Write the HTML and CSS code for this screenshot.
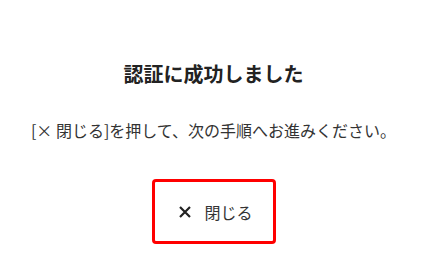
FILE: index.html
```html
<!DOCTYPE html>
<html lang="ja">
<head>
  <meta charset="UTF-8">
  <meta name="viewport" content="width=device-width, initial-scale=1.0">
  <title>認証完了</title>
  <link rel="stylesheet" href="styles.css">
</head>
<body>
  <div class="done">
    <h1 class="done-title">認証に成功しました</h1>
    <p class="done-text">[× 閉じる]を押して、次の手順へお進みください。</p>
    <button class="close-btn" type="button">
      <svg class="close-icon" viewBox="0 0 12 12" width="12" height="12">
        <path d="M1 1 L11 11 M11 1 L1 11" />
      </svg>
      <span>閉じる</span>
    </button>
  </div>
</body>
</html>
```

FILE: styles.css
```css
* {
  margin: 0;
  padding: 0;
  box-sizing: border-box;
}
body {
  background-color: #fff;
  font-family: "Noto Sans CJK JP", "Noto Sans", sans-serif;
  color: #333;
}
.done {
  display: flex;
  flex-direction: column;
  align-items: center;
  padding-top: 59px;
}
.done-title {
  font-size: 20px;
  font-weight: bold;
  line-height: 30px;
  color: #222;
}
.done-text {
  margin-top: 29px;
  font-size: 16px;
  line-height: 24px;
}
.close-btn {
  margin-top: 37px;
  width: 124px;
  height: 65px;
  padding-left: 5px;
  border: 3px solid #f00;
  border-radius: 4px;
  background-color: #fff;
  display: flex;
  align-items: center;
  justify-content: center;
  gap: 13px;
  font-family: inherit;
  font-size: 16px;
  color: #333;
  cursor: pointer;
}
.close-icon {
  stroke: #222;
  stroke-width: 2.2;
  fill: none;
}
```
